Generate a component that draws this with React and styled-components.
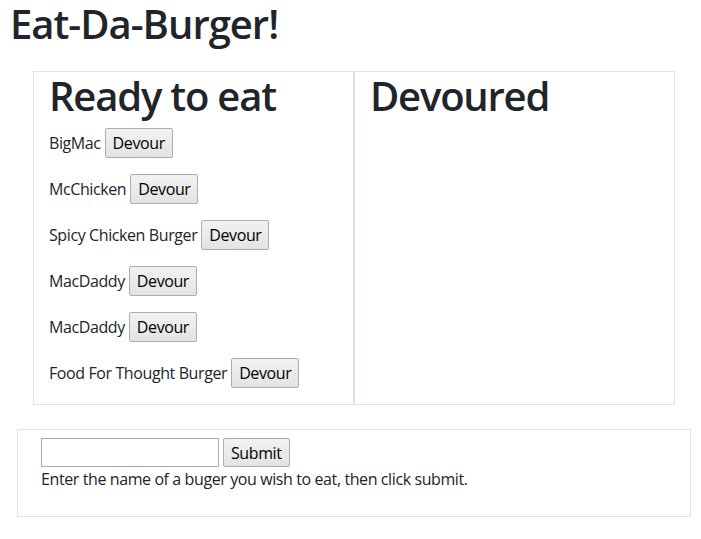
import styled, { createGlobalStyle } from 'styled-components';

const GlobalStyle = createGlobalStyle`
	body {
		margin: 0;
		background: #fff;
		color: #212529;
		font-family: "Open Sans", "Noto Sans", sans-serif;
		font-size: 16px;
		line-height: 1.5;
		letter-spacing: -0.4px;
	}
`;

const Page = styled.div`
	padding-top: 0;
`;

const Title = styled.h1`
	margin: 0 0 23px;
	padding-left: 10px;
	font-size: 40px;
	font-weight: 550;
	line-height: 48px;
	letter-spacing: -1px;
`;

const Columns = styled.div`
	display: grid;
	grid-template-columns: 321px 321px;
	margin-left: 33px;
	width: 642px;
`;

const Column = styled.div`
	border: 1px solid #dee2e6;
	padding: 0 15px;
`;

const Heading = styled.h2`
	margin: 0 0 8px;
	font-size: 40px;
	font-weight: 550;
	line-height: 48px;
	letter-spacing: -1.2px;
`;

const Item = styled.p`
	margin: 0 0 16px;
	line-height: 30px;
`;

const Button = styled.button`
	height: ${({ $height }) => $height || 30}px;
	padding: 0 7px;
	margin-left: 4px;
	border: 1px solid #adadad;
	border-radius: 2px;
	background: linear-gradient(#f2f2f2, #e3e3e3);
	color: #000;
	font-family: inherit;
	font-size: 16px;
	letter-spacing: inherit;
	line-height: 24px;
	vertical-align: baseline;
`;

const FormBox = styled.div`
	margin: 24px 0 0 17px;
	width: 674px;
	box-sizing: border-box;
	border: 1px solid #dee2e6;
	padding: 8px 23px 9px;
`;

const Field = styled.input`
	box-sizing: border-box;
	width: 178px;
	height: 29px;
	border: 1px solid #a9a9a9;
	padding: 1px 4px;
	font-family: inherit;
	font-size: 16px;
	vertical-align: bottom;
`;

const Hint = styled.p`
	margin: 0 0 16px;
`;

const burgers = ['BigMac', 'McChicken', 'Spicy Chicken Burger', 'MacDaddy', 'MacDaddy', 'Food For Thought Burger'];

export default function App() {
	return (
		<Page>
			<GlobalStyle />
			<Title>Eat-Da-Burger!</Title>
			<Columns>
				<Column>
					<Heading>Ready to eat</Heading>
					{burgers.map((name, i) => (
						<Item key={i}>
							{name}
							<Button>Devour</Button>
						</Item>
					))}
				</Column>
				<Column>
					<Heading>Devoured</Heading>
				</Column>
			</Columns>
			<FormBox>
				<form onSubmit={(e) => e.preventDefault()}>
					<Field type="text" />
					<Button $height={29} type="submit">Submit</Button>
					<Hint>Enter the name of a buger you wish to eat, then click submit.</Hint>
				</form>
			</FormBox>
		</Page>
	);
}
